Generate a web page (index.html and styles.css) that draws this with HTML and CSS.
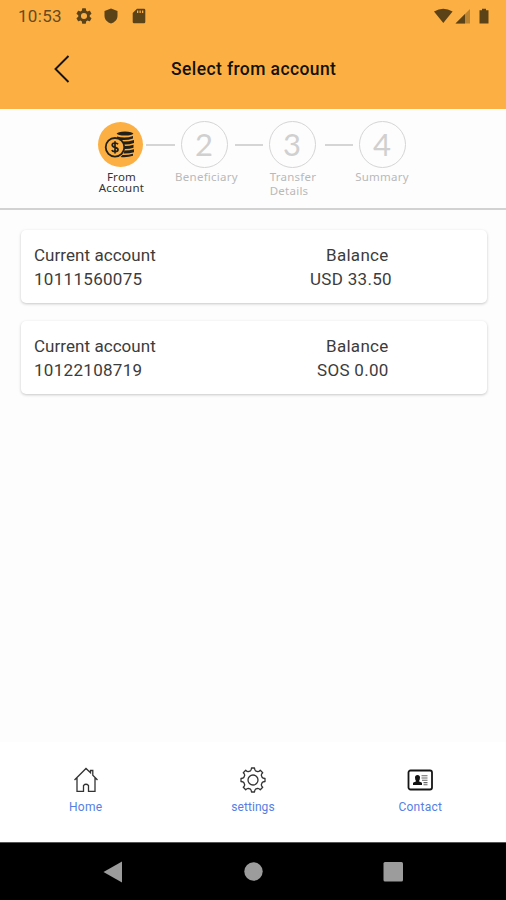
FILE: index.html
```html
<!DOCTYPE html>
<html lang="en">
<head>
<meta charset="utf-8">
<title>Select from account</title>
<link rel="stylesheet" href="styles.css">
</head>
<body>
<header class="header">
  <div class="status">
    <span class="clock">10:53</span>
    <svg class="gear" width="16" height="16" viewBox="2 2 20 20"><path d="M19.14 12.94c.04-.3.06-.61.06-.94s-.02-.64-.07-.94l2.03-1.58a.49.49 0 0 0 .12-.61l-1.92-3.32a.49.49 0 0 0-.59-.22l-2.39.96c-.5-.38-1.03-.7-1.62-.94L14.4 2.81a.48.48 0 0 0-.48-.41h-3.84a.47.47 0 0 0-.47.41l-.36 2.54c-.59.24-1.13.57-1.62.94l-2.39-.96a.47.47 0 0 0-.59.22L2.74 8.87a.47.47 0 0 0 .12.61l2.03 1.58c-.05.3-.09.63-.09.94s.02.64.07.94l-2.03 1.58a.49.49 0 0 0-.12.61l1.92 3.32c.12.22.37.29.59.22l2.39-.96c.5.38 1.03.7 1.62.94l.36 2.54c.05.24.24.41.48.41h3.84c.24 0 .44-.17.47-.41l.36-2.54c.59-.24 1.13-.56 1.62-.94l2.39.96c.22.08.47 0 .59-.22l1.92-3.32a.47.47 0 0 0-.12-.61zM12 15.8a3.8 3.8 0 1 1 0-7.6 3.8 3.8 0 0 1 0 7.6z"/></svg>
    <svg class="shield" width="14" height="16" viewBox="0 0 14 16"><path d="M7 .5 13.500 3v5c0 3.500-3 6.500-6.500 7.500C3.500 14.500.500 11.500.500 8V3z"/></svg>
    <svg class="card-icon" width="14" height="16" viewBox="0 0 14 16"><path fill-rule="evenodd" d="M5 .7h7Q13.300.7 13.300 2v12q0 1.300-1.300 1.300H2Q.700 15.300.700 14V5zM5 2.500v2.500h1.300v-2.500zm2.500 0v2.500h1.300v-2.500zm2.500 0v2.500h1.300v-2.500z"/></svg>
    <svg class="signals" width="56" height="17" viewBox="0 0 56 17"><path d="M0 3.500Q9.300-2 18.600 3.500L9.300 15z"/><path opacity=".4" d="M36 1v14.500H21.500z"/><path d="M31 6v9.500h-9.500z"/><path d="M48 .7h4v1.600h2.500v13.200h-9V2.300H48z"/></svg>
  </div>
  <div class="titlebar">
    <svg class="back" width="18" height="30" viewBox="0 0 18 30"><path d="M15.500 2 2.500 15l13 13"/></svg>
    <h1>Select from account</h1>
  </div>
</header>

<section class="stepper">
  <div class="step active">
    <div class="circle">
      <svg width="32" height="30" viewBox="0 0 32 30">
        <g class="coins"><ellipse cx="21" cy="3.600" rx="8.300" ry="2"/><path d="M13 6.500q8 2.300 16-.5v2.500q-5 2-12 1.500-2-1.800-4-2zM18 11.500q6 .3 12-1.500v3q-5 1.800-10.500 1.500zM20.500 16q5 0 9-1.300v3q-4 1.300-9 1.200zM20.500 20.500q5 0 9.500-1.300v3q-5 1.500-10.500 1.300zM18.500 25q6 .2 10.500-1.200v2q-6 2-12.500 1.200z"/></g>
        <circle cx="11" cy="17.300" r="9.300" class="coin-ring"/>
        <path class="dollar" d="M14 14.300Q13.200 13 11 13q-2.800 0-2.800 2 0 1.700 2.800 2.300 3 .6 3 2.400T11 21.700q-2.500 0-3.200-1.600M11 11.200v12.300"/>
      </svg>
    </div>
    <span class="label label-active">From<br>Account</span>
  </div>
  <i class="line line-a"></i>
  <div class="step"><div class="circle">2</div><span class="label shift">Beneficiary</span></div>
  <i class="line line-b"></i>
  <div class="step"><div class="circle">3</div><span class="label left">Transfer<br>Details</span></div>
  <i class="line line-c"></i>
  <div class="step"><div class="circle">4</div><span class="label">Summary</span></div>
</section>

<main class="accounts">
  <article class="account">
    <div class="info"><span class="kind">Current account</span><span>10111560075</span></div>
    <div class="balance"><span class="caption">Balance</span><span class="usd">USD 33.50</span></div>
  </article>
  <article class="account">
    <div class="info"><span class="kind">Current account</span><span>10122108719</span></div>
    <div class="balance"><span class="caption">Balance</span><span class="sos">SOS 0.00</span></div>
  </article>
</main>

<nav class="tabs">
  <div class="tab">
    <svg width="28" height="28" viewBox="0 0 28 28"><path d="M2.500 14 14 2.500l4.500 4.300V4.500h2.300v4.700L25.500 14M5 12v13.300h6.500V19.500q2.500-2.500 5 0v5.800H23V12"/></svg>
    <span>Home</span>
  </div>
  <div class="tab settings">
    <svg width="28" height="28" viewBox="0 0 28 28"><circle cx="14" cy="14" r="5"/><path stroke-linejoin="round" d="M11.500 4.800Q12.300 4.200 12.500 2h3q.2 2.200 1 2.800l2.200.9q1.200.1 2.600-1.400l2.400 2.400q-1.500 1.400-1.400 2.600l.9 2.200q.6.800 2.800 1v3q-2.200.2-2.800 1l-.9 2.200q-.1 1.200 1.400 2.600l-2.400 2.400q-1.400-1.500-2.600-1.400l-2.200.9q-.8.600-1 2.800h-3q-.2-2.200-1-2.800l-2.200-.9q-1.200-.1-2.600 1.400l-2.400-2.400q1.500-1.400 1.400-2.600l-.9-2.200q-.6-.8-2.800-1v-3q2.200-.2 2.800-1l.9-2.200q.1-1.200-1.400-2.600l2.400-2.400q1.400 1.500 2.600 1.400z"/></svg>
    <span>settings</span>
  </div>
  <div class="tab contact">
    <svg width="28" height="28" viewBox="0 0 28 28"><rect x="2.500" y="4.500" width="23.500" height="19" rx="2" stroke-width="1.800"/><path class="solid" d="M7 19v-2.300l3.200-1.400Q9 13.800 9 11.500 9 9 11.500 9T14 11.500q0 2.300-1.200 3.800l3.200 1.400V19z"/><path class="rows" d="M15.500 9.700h6M15.500 12h6M16 14.300h5.500M17.500 16.600h4M17.500 18.800h4"/></svg>
    <span>Contact</span>
  </div>
</nav>

<footer class="system">
  <svg width="20" height="22" viewBox="0 0 20 22"><path d="M.5 11 19 .5v21z"/></svg>
  <svg width="20" height="22" viewBox="0 0 20 22"><circle cx="10.500" cy="10.500" r="9.200"/></svg>
  <svg width="20" height="22" viewBox="0 0 20 22"><rect x=".5" y="1" width="19.500" height="19.500" rx="1.500"/></svg>
</footer>
</body>
</html>
```
FILE: styles.css
```css
* { box-sizing: border-box; }
body {
  margin: 0;
  height: 900px;
  display: flex;
  flex-direction: column;
  background: #fdfdfd;
  font-family: Roboto, sans-serif;
  color: #3c3c3c;
  overflow: hidden;
}
svg { display: block; flex: none; }

.header { height: 109px; background: #fcb043; }
.status {
  height: 32px;
  padding: 0 16px 0 18px;
  display: flex;
  align-items: center;
  color: #674a1e;
  fill: #5c4217;
}
.clock { width: 58px; font-size: 17px; letter-spacing: .3px; }
.shield { margin-left: 12px; }
.card-icon { margin-left: 14px; }
.signals { margin-left: auto; }
.titlebar { height: 74px; display: flex; align-items: center; padding-left: 53px; }
.back { fill: none; stroke: #17130a; stroke-width: 1.9; }
h1 {
  margin: 0 0 0 100px;
  font-size: 17.5px;
  font-weight: 500;
  letter-spacing: .4px;
  color: #15110a;
  white-space: nowrap;
}

.stepper {
  height: 101px;
  padding: 12px 0 0 95px;
  display: flex;
  background: #fdfdfd;
  border-bottom: 2px solid #d2d2d2;
}
.step {
  width: 50px;
  display: flex;
  flex-direction: column;
  align-items: center;
  color: #b9b9b9;
}
.circle {
  width: 47px;
  height: 47px;
  flex: none;
  display: flex;
  align-items: center;
  justify-content: center;
  border: 1.5px solid #d5d5d5;
  border-radius: 50%;
  font: 31px/47px Lato, sans-serif;
  color: #d0d0d0;
}
.active .circle { width: 45px; height: 45px; margin: 1px 0; background: #fcb043; border: 0; }
.label {
  margin-top: 2px;
  font: 11.5px/14px "Noto Sans", sans-serif;
  letter-spacing: .25px;
  text-align: center;
  white-space: nowrap;
}
.label-active { line-height: 11px; margin-top: 3px; margin-left: 3px; color: #333; font-size: 11.5px; }
.shift { margin-left: 5px; }
.left { text-align: left; margin-left: 2px; }
.line { height: 2px; flex: none; margin-top: 23px; background: #d5d5d5; }
.line-a { width: 29px; margin-left: 1px; margin-right: 4px; }
.line-b { width: 28px; margin-left: 6px; margin-right: 4px; }
.line-c { width: 28px; margin-left: 8px; margin-right: 4px; }
.coins { fill: #222018; }
.coin-ring { fill: #fcb043; stroke: #222018; stroke-width: 1.8; }
.dollar { fill: none; stroke: #222018; stroke-width: 1.7; }

.accounts {
  flex: 1;
  padding: 20px 19px 0 21px;
  display: flex;
  flex-direction: column;
  gap: 18px;
}
.account {
  height: 73px;
  padding: 13px 0 0 13px;
  display: flex;
  background: #fff;
  border-radius: 5px;
  box-shadow: 0 1px 3px rgba(0, 0, 0, .22);
  font-size: 17px;
  line-height: 24px;
  letter-spacing: .3px;
}
.info, .balance { display: flex; flex-direction: column; }
.info { width: 276px; }
.kind { letter-spacing: .05px; }
.balance { width: 82px; }
.balance span { white-space: nowrap; }
.caption { margin-left: 16px; }
.sos { margin-left: 7px; }

.tabs { height: 100px; padding: 24px 2px 0; display: flex; background: #fff; }
.tab {
  flex: 1;
  display: flex;
  flex-direction: column;
  align-items: center;
  font-size: 12px;
  line-height: 16px;
  letter-spacing: .25px;
  color: #5480e4;
}
.settings { letter-spacing: .05px; }
.tab svg { fill: none; stroke: #333; stroke-width: 1.3; margin-bottom: 5px; }
.tab .solid { fill: #111; stroke: none; }
.tab .rows { stroke: #666; stroke-width: 1.1; }
.contact svg { stroke: #151515; }

.system {
  height: 58px;
  padding: 0 103px;
  display: flex;
  align-items: center;
  justify-content: space-between;
  background: #000;
  fill: #9c9c9c;
  border-top: 1px solid #555;
}
```
